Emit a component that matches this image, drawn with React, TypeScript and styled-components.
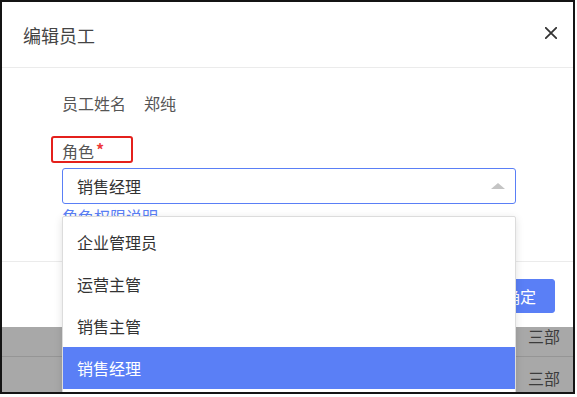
import React from 'react';
import styled, { createGlobalStyle } from 'styled-components';

const GlobalStyle = createGlobalStyle`
  html, body {
    margin: 0;
    padding: 0;
    background: #ffffff;
  }
  body {
    font-family: "Noto Sans CJK SC", "Noto Sans", "Liberation Sans", sans-serif;
  }
  * {
    box-sizing: border-box;
  }
`;

const BLUE = '#5a7ff6';

const Canvas = styled.div`
  width: 577px;
  height: 397px;
  background: #ffffff;
`;

const Frame = styled.div`
  width: 575px;
  height: 394px;
  border: 2px solid #141414;
  overflow: hidden;
  display: flex;
  flex-direction: column;
  background: #a8a8a8;
`;

const Dialog = styled.section`
  position: relative;
  z-index: 2;
  flex: none;
  background: #ffffff;
`;

const Header = styled.header`
  height: 66px;
  padding: 0 16px 0 21px;
  display: flex;
  align-items: center;
  justify-content: space-between;
  border-bottom: 1px solid #ebebeb;
`;

const Title = styled.h2`
  margin: 0;
  font-size: 18px;
  font-weight: 400;
  line-height: 24px;
  color: #444;
`;

const CloseButton = styled.button`
  width: 12px;
  height: 12px;
  padding: 0;
  margin-top: -3px;
  border: 0;
  background: none;
  display: flex;
  cursor: pointer;
`;

const Body = styled.div`
  padding: 24px 57px 34px 60px;
  font-size: 16px;
  line-height: 22px;
`;

const InfoRow = styled.div`
  display: flex;
  gap: 18px;
  color: #555;
`;

const FieldLabel = styled.label`
  position: relative;
  display: block;
  width: fit-content;
  margin-top: 26px;
  color: #555;
`;

const Required = styled.span`
  color: #ee3a3a;
  font-weight: 700;
  margin-left: 2px;
  position: relative;
  top: -2px;
`;

const Annotation = styled.span`
  position: absolute;
  left: -11px;
  top: -4px;
  width: 82px;
  height: 27px;
  border: 2px solid #e4201c;
  border-radius: 3px;
  pointer-events: none;
`;

const SelectWrap = styled.div`
  position: relative;
  margin-top: 6px;
`;

const SelectBox = styled.div`
  height: 36px;
  padding: 0 10px 0 14px;
  display: flex;
  align-items: center;
  justify-content: space-between;
  border: 1px solid ${BLUE};
  border-radius: 3px;
  color: #333;
`;

const Caret = styled.span`
  width: 0;
  height: 0;
  border-left: 7px solid transparent;
  border-right: 7px solid transparent;
  border-bottom: 6px solid #c4c4c4;
`;

const Menu = styled.ul`
  position: absolute;
  z-index: 10;
  top: 48px;
  left: 0;
  right: 0;
  margin: 0;
  padding: 4px 0;
  list-style: none;
  background: #ffffff;
  border: 1px solid #dcdcdc;
  border-radius: 2px;
  box-shadow: 0 2px 8px rgba(0, 0, 0, 0.12);
`;

const MenuItem = styled.li<{ $active?: boolean }>`
  height: 42px;
  padding: 0 14px;
  display: flex;
  align-items: center;
  color: ${(p) => (p.$active ? '#ffffff' : '#333')};
  background: ${(p) => (p.$active ? BLUE : 'transparent')};
`;

const HelpLink = styled.a`
  display: block;
  margin-top: 1px;
  color: ${BLUE};
  text-decoration: none;
`;

const Footer = styled.footer`
  padding: 17px 18px 14px;
  display: flex;
  justify-content: flex-end;
  gap: 12px;
  border-top: 1px solid #ebebeb;
`;

const Button = styled.button<{ $primary?: boolean }>`
  height: 34px;
  padding: 0 18px;
  border-radius: 3px;
  font-family: inherit;
  font-size: 16px;
  line-height: 22px;
  border: 1px solid ${(p) => (p.$primary ? BLUE : '#dcdcdc')};
  background: ${(p) => (p.$primary ? BLUE : '#ffffff')};
  color: ${(p) => (p.$primary ? '#ffffff' : '#555')};
`;

const PageBehind = styled.div`
  margin-top: -12px;
`;

const MaskedRow = styled.div`
  height: 42px;
  display: grid;
  grid-template-columns: 1fr 47px;
  align-items: center;
  border-bottom: 1px solid #959595;
  font-size: 16px;
  color: #3c3c3c;
`;

const Cell = styled.span`
  padding-left: 2px;
`;

const roles = ['企业管理员', '运营主管', '销售主管', '销售经理'];

export default function App() {
  const selected = '销售经理';

  return (
    <>
      <GlobalStyle />
      <Canvas>
        <Frame>
          <Dialog>
            <Header>
              <Title>编辑员工</Title>
              <CloseButton aria-label="关闭">
                <svg width="12" height="12" viewBox="0 0 12 12">
                  <path d="M0.8 0.8L11.2 11.2M11.2 0.8L0.8 11.2" stroke="#333" strokeWidth="1.8" strokeLinecap="round" />
                </svg>
              </CloseButton>
            </Header>
            <Body>
              <InfoRow>
                <span>员工姓名</span>
                <span>郑纯</span>
              </InfoRow>
              <FieldLabel>
                角色<Required>*</Required>
                <Annotation />
              </FieldLabel>
              <SelectWrap>
                <SelectBox>
                  <span>{selected}</span>
                  <Caret />
                </SelectBox>
                <Menu>
                  {roles.map((r) => (
                    <MenuItem key={r} $active={r === selected}>
                      {r}
                    </MenuItem>
                  ))}
                </Menu>
              </SelectWrap>
              <HelpLink href="#">角色权限说明</HelpLink>
            </Body>
            <Footer>
              <Button>取消</Button>
              <Button $primary>确定</Button>
            </Footer>
          </Dialog>
          <PageBehind>
            <MaskedRow>
              <span />
              <Cell>三部</Cell>
            </MaskedRow>
            <MaskedRow>
              <span />
              <Cell>三部</Cell>
            </MaskedRow>
          </PageBehind>
        </Frame>
      </Canvas>
    </>
  );
}
